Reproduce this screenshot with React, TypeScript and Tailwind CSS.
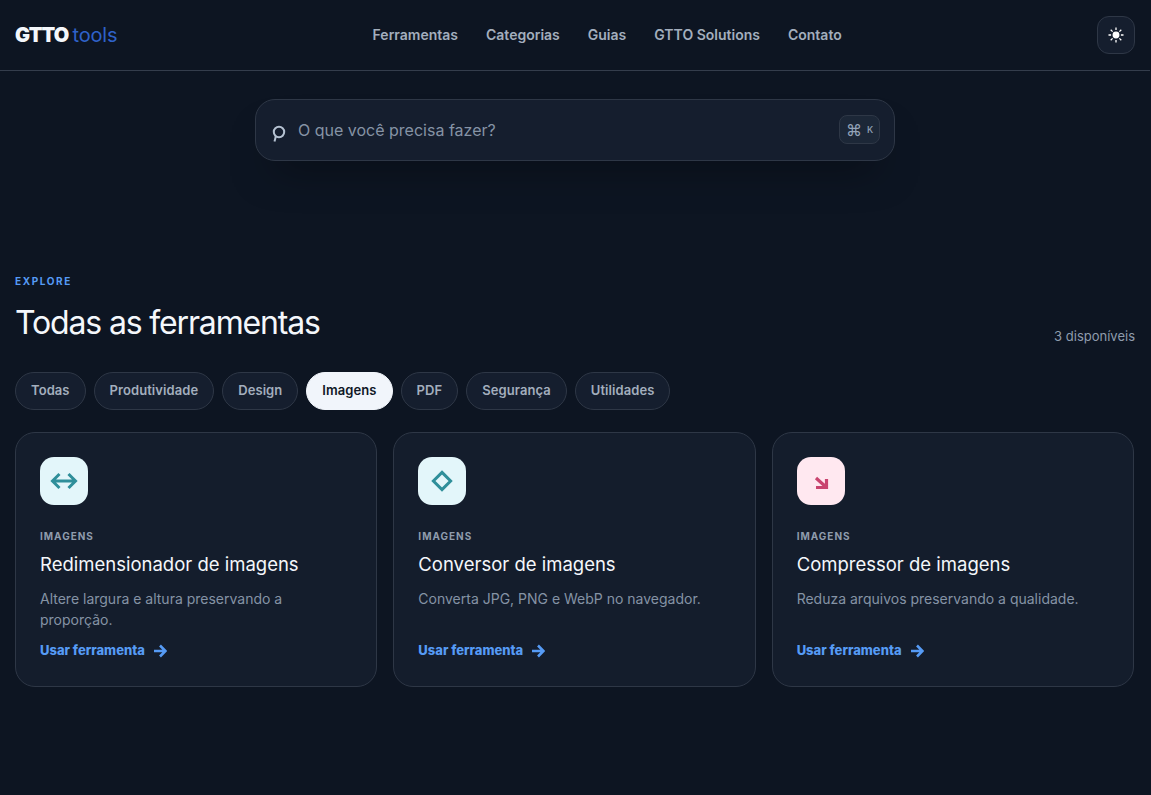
const navLinks = ["Ferramentas", "Categorias", "Guias", "GTTO Solutions", "Contato"]
const filters = ["Todas", "Produtividade", "Design", "Imagens", "PDF", "Segurança", "Utilidades"]

function ResizeIcon() {
  return (
    <svg width="28" height="28" viewBox="0 0 28 28" fill="none" stroke="#2f8f9a" strokeWidth="3">
      <path d="M2.5 14h23M9.5 7 2.5 14l7 7M18.5 7l7 7-7 7" />
    </svg>
  )
}

function DiamondIcon() {
  return (
    <svg width="28" height="28" viewBox="0 0 28 28" fill="none" stroke="#2f8f9a" strokeWidth="3">
      <path d="M14 5.4 22.6 14 14 22.6 5.4 14Z" />
    </svg>
  )
}

function CompressIcon() {
  return (
    <svg width="28" height="28" viewBox="0 0 28 28" fill="none" stroke="#c9446f" strokeWidth="3.2">
      <path d="M9 11 19 20M19.5 12v8.5H9" />
    </svg>
  )
}

function SunIcon() {
  return (
    <svg width="16" height="16" viewBox="0 0 16 16" fill="#ffffff" stroke="#ffffff" strokeWidth="1.3">
      <circle cx="8" cy="8" r="2.8" />
      <path d="M8 .5v2.6M8 12.9v2.6M.5 8h2.6M12.9 8h2.6M2.7 2.7l1.9 1.9M11.4 11.4l1.9 1.9M2.7 13.3l1.9-1.9M11.4 4.6l1.9-1.9" />
    </svg>
  )
}

const tools = [
  {
    title: "Redimensionador de imagens",
    text: "Altere largura e altura preservando a proporção.",
    icon: <ResizeIcon />,
    tint: "bg-[#e3f6fa]",
  },
  {
    title: "Conversor de imagens",
    text: "Converta JPG, PNG e WebP no navegador.",
    icon: <DiamondIcon />,
    tint: "bg-[#e3f6fa]",
  },
  {
    title: "Compressor de imagens",
    text: "Reduza arquivos preservando a qualidade.",
    icon: <CompressIcon />,
    tint: "bg-[#ffe8f0]",
  },
]

export default function App() {
  return (
    <div className="min-h-[795px] bg-[#0d1522] font-['Inter',sans-serif] text-white">
      <div className="w-[1150px]">
        <header className="h-[71px] border-b border-[#343d4c]">
          <div className="mx-auto flex h-[70px] max-w-[1120px] items-center justify-between">
            <a className="flex items-baseline gap-[4px] text-[20px]">
              <span className="font-black tracking-[-0.8px] text-[#f4f7fb]">GTTO</span>
              <span className="font-normal tracking-[-0.2px] text-[#2f62c9]">tools</span>
            </a>
            <nav className="flex gap-7 text-sm font-semibold text-[#a3aebd]">
              {navLinks.map((link) => (
                <a key={link}>{link}</a>
              ))}
            </nav>
            <button className="flex size-[38px] items-center justify-center rounded-xl border border-[#2e3746] bg-[#151e2e]">
              <SunIcon />
            </button>
          </div>
        </header>

        <div className="mx-auto mt-7 flex h-[62px] w-[640px] items-center rounded-[20px] border border-[#2e3746] bg-[#151e2e] pl-[15px] pr-[14px] shadow-[0_24px_40px_-20px_rgba(0,0,0,0.5)]">
          <svg width="18" height="20" viewBox="0 0 18 20" fill="none" stroke="#b5c2d2" strokeWidth="2" className="mt-[4px]">
            <circle cx="8" cy="10" r="5.2" />
            <path d="M4.8 14.5 3.5 19.5" />
          </svg>
          <span className="ml-[9px] flex-1 text-base text-[#8593a5]">O que você precisa fazer?</span>
          <kbd className="mb-[1px] flex h-[29px] w-[41px] items-center justify-center gap-[5px] rounded-lg border border-[#2e3746] bg-[#1c2737] font-['Inter',sans-serif] text-[#93a3b8]">
            <span className="text-[16px] leading-none">⌘</span>
            <span className="text-[9px] font-medium leading-none">K</span>
          </kbd>
        </div>

        <main className="mx-auto mt-[113px] max-w-[1120px]">
          <div className="flex items-end justify-between">
            <div>
              <p className="text-[10px] leading-[14px] font-bold tracking-[1.6px] text-[#569bf5]">EXPLORE</p>
              <h1 className="mt-[15px] text-[32px] leading-[40px] font-normal tracking-[-1.15px] text-[#f4f7fb]">
                Todas as ferramentas
              </h1>
            </div>
            <span className="mb-[-3px] text-[13px] leading-[20px] text-[#8f9cad]">3 disponíveis</span>
          </div>

          <div className="mt-[29px] flex gap-2">
            {filters.map((filter) =>
              filter === "Imagens" ? (
                <button
                  key={filter}
                  className="h-[38px] rounded-full border border-[#f1f5fb] bg-[#f1f5fb] px-[15px] text-[13px] font-semibold tracking-[0.075px] text-[#0f1726]"
                >
                  {filter}
                </button>
              ) : (
                <button
                  key={filter}
                  className="h-[38px] rounded-full border border-[#2e3746] bg-[#151e2e] px-[15px] text-[13px] font-semibold tracking-[0.075px] text-[#a3aebd]"
                >
                  {filter}
                </button>
              ),
            )}
          </div>

          <div className="mt-[22px] grid w-[1119px] grid-cols-3 gap-4">
            {tools.map((tool) => (
              <article
                key={tool.title}
                className="flex h-[255px] flex-col rounded-[20px] border border-[#2e3746] bg-[#141d2c] px-6 pt-6"
              >
                <div className={"flex size-12 items-center justify-center rounded-[14px] " + tool.tint}>{tool.icon}</div>
                <p className="mt-[24px] text-[10px] leading-[14px] font-bold tracking-[1px] text-[#8f9cad]">IMAGENS</p>
                <h2 className="mt-[8px] text-[18.5px] leading-[26px] font-normal text-[#f4f7fb]">{tool.title}</h2>
                <p className="mt-[11px] h-[42px] text-sm leading-[21px] text-[#8593a5]">{tool.text}</p>
                <a className="mt-[11px] flex items-center gap-[8px] text-[13px] font-extrabold text-[#569bf5]">
                  Usar ferramenta
                  <svg width="14" height="14" viewBox="0 0 14 14" fill="none" stroke="#569bf5" strokeWidth="2.6">
                    <path d="M1 7h11M7 1.5 12.5 7 7 12.5" />
                  </svg>
                </a>
              </article>
            ))}
          </div>
        </main>
      </div>
    </div>
  )
}
